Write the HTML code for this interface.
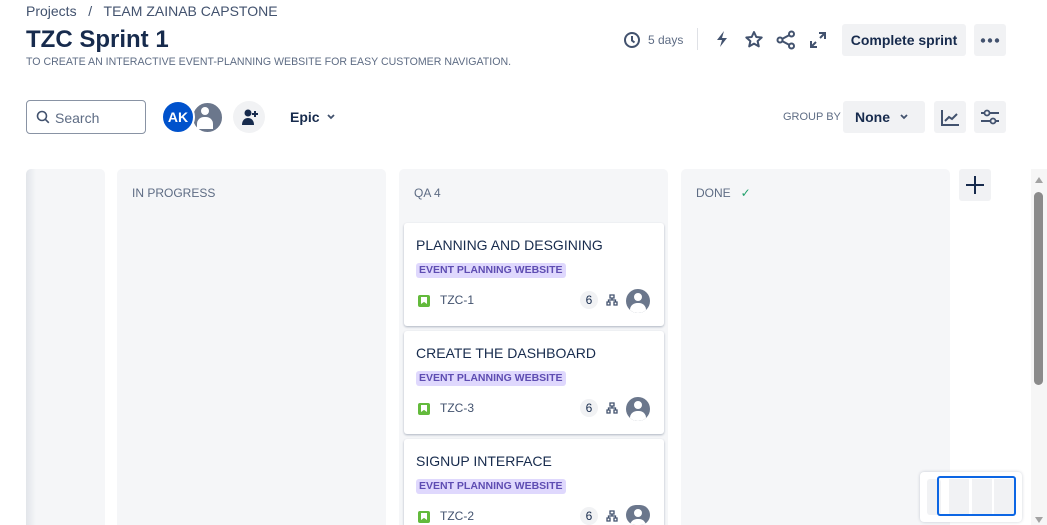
<!DOCTYPE html>
<html style="width:1047px;height:525px;overflow:hidden"><head><meta charset="utf-8"><style>
*{box-sizing:border-box;margin:0;padding:0}
body{width:1047px;height:525px;overflow:hidden;background:#fff;font-family:"Liberation Sans",sans-serif;color:#172b4d;position:relative}
.a{position:absolute}
.crumb{left:26px;top:3px;font-size:14px;color:#42526e}
h1{position:absolute;left:26px;top:26px;font-size:24px;font-weight:700;color:#172b4d}
.sub{left:26px;top:56px;font-size:10.6px;color:#5e6c84}
.btn{background:#f1f2f4;border-radius:3px}
.col{background:#f5f6f8;border-radius:5px 5px 0 0;top:169px;height:356px}
.ch{font-size:12px;color:#5e6c84}
.card{left:404px;width:260px;height:103px;background:#fff;border-radius:3px;box-shadow:0 1px 2px rgba(9,30,66,.3)}
.card .t{position:absolute;left:12px;top:14px;font-size:14px;color:#172b4d}
.card .l{position:absolute;left:12px;top:40px;height:15px;padding:0 3px;background:#dfd8fd;border-radius:3px;font-size:10.5px;font-weight:700;color:#5e4db2;line-height:15px}
.card .ic{position:absolute;left:14px;top:72px;width:12px;height:12px;background:#63ba3c;border-radius:2px}
.card .ic:after{content:"";position:absolute;left:3px;top:2px;width:6px;height:7px;background:#fff;clip-path:polygon(0 0,100% 0,100% 100%,50% 70%,0 100%)}
.card .k{position:absolute;left:36px;top:70px;font-size:12px;color:#42526e}
.card .n{position:absolute;left:176px;top:68px;width:18px;height:18px;border-radius:9px;background:#f1f2f4;font-size:12px;text-align:center;line-height:18px}
.card .av{position:absolute;left:222px;top:66px;width:24px;height:24px;border-radius:12px;background:#6b778c;overflow:hidden}
.av:before{content:"";position:absolute;left:8px;top:4px;width:8px;height:8px;border-radius:50%;background:#fff}
.av:after{content:"";position:absolute;left:4px;top:14px;width:16px;height:12px;border-radius:7px 7px 0 0;background:#fff}
</style></head><body>
<div class="a crumb">Projects &nbsp;&nbsp;/&nbsp;&nbsp; TEAM ZAINAB CAPSTONE</div>
<h1>TZC Sprint 1</h1>
<div class="a sub">TO CREATE AN INTERACTIVE EVENT-PLANNING WEBSITE FOR EASY CUSTOMER NAVIGATION.</div>

<svg class="a" style="left:623px;top:31px" width="18" height="18" viewBox="0 0 18 18"><circle cx="9" cy="9" r="7" fill="none" stroke="#42526e" stroke-width="2"/><path d="M9 5v4.5l2.5 2" fill="none" stroke="#42526e" stroke-width="2"/></svg>
<div class="a" style="left:648px;top:33px;font-size:12px;color:#5e6c84">5 days</div>
<div class="a" style="left:697px;top:28px;width:1px;height:22px;background:#dfe1e6"></div>
<svg class="a" style="left:714px;top:30px" width="16" height="18" viewBox="0 0 16 18"><path d="M10 1L3 10h5l-2 7 7-9H8z" fill="#42526e"/></svg>
<svg class="a" style="left:744px;top:30px" width="20" height="19" viewBox="0 0 20 19"><path d="M10 2l2.3 5 5.4.5-4.1 3.6 1.2 5.3L10 13.6l-4.8 2.8 1.2-5.3L2.3 7.5 7.7 7z" fill="none" stroke="#42526e" stroke-width="2" stroke-linejoin="round"/></svg>
<svg class="a" style="left:776px;top:30px" width="20" height="20" viewBox="0 0 20 20"><circle cx="4" cy="10" r="2.5" fill="none" stroke="#42526e" stroke-width="2"/><circle cx="15.5" cy="4" r="2.5" fill="none" stroke="#42526e" stroke-width="2"/><circle cx="15.5" cy="16" r="2.5" fill="none" stroke="#42526e" stroke-width="2"/><path d="M6 9l7.5-4M6 11l7.5 4" stroke="#42526e" stroke-width="2"/></svg>
<svg class="a" style="left:809px;top:31px" width="18" height="18" viewBox="0 0 18 18"><path d="M10 2h6v6M16 2l-5 5M8 16H2v-6M2 16l5-5" fill="none" stroke="#42526e" stroke-width="2"/></svg>
<div class="a btn" style="left:842px;top:24px;width:124px;height:32px;font-size:14px;font-weight:700;text-align:center;line-height:32px">Complete sprint</div>
<div class="a btn" style="left:974px;top:24px;width:32px;height:32px"></div>
<svg class="a" style="left:980px;top:38px" width="20" height="5" viewBox="0 0 20 5"><circle cx="3" cy="2.5" r="2.2" fill="#42526e"/><circle cx="10" cy="2.5" r="2.2" fill="#42526e"/><circle cx="17" cy="2.5" r="2.2" fill="#42526e"/></svg>

<div class="a" style="left:26px;top:100px;width:120px;height:34px;border:1px solid #8993a4;border-radius:4px"></div>
<svg class="a" style="left:36px;top:110px" width="14" height="14" viewBox="0 0 14 14"><circle cx="6" cy="6" r="4.5" fill="none" stroke="#42526e" stroke-width="1.6"/><path d="M9.3 9.3l3.5 3.5" stroke="#42526e" stroke-width="1.6"/></svg>
<div class="a" style="left:55px;top:110px;font-size:14px;color:#5e6c84">Search</div>
<div class="a av" style="left:191px;top:101px;width:33px;height:33px;border-radius:50%;background:#6b778c;border:2px solid #fff"></div>
<div class="a" style="left:161px;top:100px;width:34px;height:34px;border-radius:50%;background:#0052cc;border:2px solid #fff;color:#fff;font-size:14px;font-weight:700;text-align:center;line-height:30px">AK</div>
<div class="a" style="left:233px;top:101px;width:32px;height:32px;border-radius:50%;background:#f1f2f4"></div>
<svg class="a" style="left:240px;top:107px" width="20" height="20" viewBox="0 0 20 20"><circle cx="8" cy="6" r="3.5" fill="#172b4d"/><path d="M2 18c0-5 3-7 6-7s6 2 6 7z" fill="#172b4d"/><path d="M15 4v6M12 7h6" stroke="#172b4d" stroke-width="2"/></svg>
<div class="a" style="left:290px;top:109px;font-size:14px;font-weight:700">Epic</div>
<svg class="a" style="left:326px;top:113px" width="10" height="8" viewBox="0 0 10 8"><path d="M2 2l3 3 3-3" fill="none" stroke="#42526e" stroke-width="1.8"/></svg>

<div class="a" style="left:783px;top:111px;font-size:11px;color:#5e6c84">GROUP BY</div>
<div class="a btn" style="left:843px;top:101px;width:82px;height:32px"></div>
<div class="a" style="left:855px;top:109px;font-size:14px;font-weight:700">None</div>
<svg class="a" style="left:899px;top:113px" width="10" height="8" viewBox="0 0 10 8"><path d="M2 2l3 3 3-3" fill="none" stroke="#42526e" stroke-width="1.8"/></svg>
<div class="a btn" style="left:934px;top:101px;width:32px;height:32px"></div>
<svg class="a" style="left:940px;top:107px" width="20" height="20" viewBox="0 0 20 20"><path d="M2 3v15h17" fill="none" stroke="#42526e" stroke-width="2"/><path d="M5 14l4-4 3 2 5-5" fill="none" stroke="#42526e" stroke-width="2"/></svg>
<div class="a btn" style="left:974px;top:101px;width:32px;height:32px"></div>
<svg class="a" style="left:980px;top:107px" width="20" height="20" viewBox="0 0 20 20"><path d="M1 6h18M1 14h18" stroke="#42526e" stroke-width="2"/><circle cx="7" cy="6" r="2.5" fill="#f1f2f4" stroke="#42526e" stroke-width="1.8"/><circle cx="13" cy="14" r="2.5" fill="#f1f2f4" stroke="#42526e" stroke-width="1.8"/></svg>

<div class="a col" style="left:26px;width:79px;background:linear-gradient(90deg,#e2e5ea,#f5f6f8 10px)"></div>
<div class="a col" style="left:117px;width:269px"><div class="a ch" style="left:15px;top:17px">IN PROGRESS</div></div>
<div class="a col" style="left:399px;width:269px"><div class="a ch" style="left:15px;top:17px">QA 4</div></div>
<div class="a col" style="left:681px;width:269px"><div class="a ch" style="left:15px;top:17px">DONE &nbsp;&nbsp;<span style="color:#22a06b">✓</span></div></div>
<div class="a btn" style="left:959px;top:169px;width:32px;height:32px"></div>
<svg class="a" style="left:965px;top:175px" width="20" height="20" viewBox="0 0 20 20"><path d="M10 1v18M1 10h18" stroke="#172b4d" stroke-width="2"/></svg>

<div class="a card" style="top:223px"><div class="t">PLANNING AND DESGINING</div><div class="l">EVENT PLANNING WEBSITE</div><div class="ic"></div><div class="k">TZC-1</div><div class="n">6</div><svg class="a" style="left:202px;top:71px" width="12" height="12" viewBox="0 0 12 12"><path d="M4 1h4v3H4zM1 8h3v3H1zM8 8h3v3H8zM6 4v2M2.5 8V6h7v2" fill="none" stroke="#42526e" stroke-width="1.3"/></svg><div class="av"></div></div>
<div class="a card" style="top:331px"><div class="t">CREATE THE DASHBOARD</div><div class="l">EVENT PLANNING WEBSITE</div><div class="ic"></div><div class="k">TZC-3</div><div class="n">6</div><svg class="a" style="left:202px;top:71px" width="12" height="12" viewBox="0 0 12 12"><path d="M4 1h4v3H4zM1 8h3v3H1zM8 8h3v3H8zM6 4v2M2.5 8V6h7v2" fill="none" stroke="#42526e" stroke-width="1.3"/></svg><div class="av"></div></div>
<div class="a card" style="top:439px;height:86px;border-radius:3px 3px 0 0"><div class="t">SIGNUP INTERFACE</div><div class="l">EVENT PLANNING WEBSITE</div><div class="ic"></div><div class="k">TZC-2</div><div class="n">6</div><svg class="a" style="left:202px;top:71px" width="12" height="12" viewBox="0 0 12 12"><path d="M4 1h4v3H4zM1 8h3v3H1zM8 8h3v3H8zM6 4v2M2.5 8V6h7v2" fill="none" stroke="#42526e" stroke-width="1.3"/></svg><div class="av" style="height:20px"></div></div>

<div class="a" style="left:920px;top:472px;width:102px;height:50px;background:#fff;border-radius:4px;box-shadow:0 0 3px rgba(9,30,66,.2)"></div>
<div class="a" style="left:927px;top:479px;width:14px;height:36px;background:#f1f2f4;border-radius:3px"></div>
<div class="a" style="left:949px;top:479px;width:20px;height:36px;background:#f1f2f4"></div>
<div class="a" style="left:972px;top:479px;width:20px;height:36px;background:#f1f2f4"></div>
<div class="a" style="left:994px;top:479px;width:20px;height:36px;background:#f1f2f4"></div>
<div class="a" style="left:937px;top:476px;width:79px;height:40px;border:2px solid #0c66e4;border-radius:3px"></div>

<div class="a" style="left:1031px;top:169px;width:16px;height:356px;background:#f6f6f6"></div>
<div class="a" style="left:1035px;top:177px;width:0;height:0;border-left:4px solid transparent;border-right:4px solid transparent;border-bottom:6px solid #a3a3a3"></div>
<div class="a" style="left:1034px;top:192px;width:9px;height:193px;background:#8b8b8b;border-radius:5px"></div>
<div class="a" style="left:1035px;top:517px;width:0;height:0;border-left:4px solid transparent;border-right:4px solid transparent;border-top:6px solid #a3a3a3"></div>
</body></html>
